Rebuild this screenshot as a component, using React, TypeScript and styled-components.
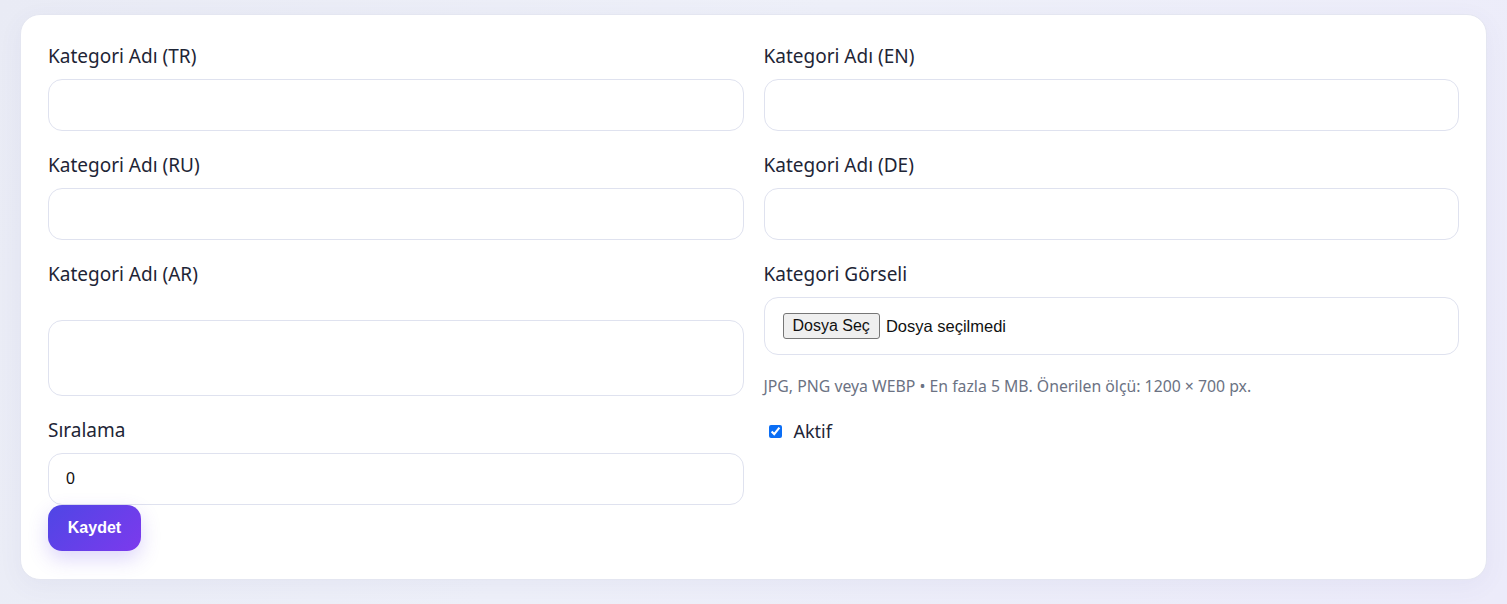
import React from 'react';
import styled, { createGlobalStyle } from 'styled-components';

const GlobalStyle = createGlobalStyle`
    html, body {
        margin: 0;
        padding: 0;
    }
    body {
        min-height: 100vh;
        background: linear-gradient(120deg, #e9ebf5 0%, #eef0f9 45%, #ecebfa 100%);
        font-family: "Noto Sans", "Open Sans", sans-serif;
    }
`;

const Page = styled.div`
    padding: 14px 20px 24px;
`;

const Card = styled.form`
    background: #ffffff;
    border: 1px solid #e4e6f1;
    border-radius: 20px;
    padding: 27px 27px 28px;
    box-shadow: 0 6px 24px rgba(90, 90, 160, 0.06);
`;

const Grid = styled.div`
    display: grid;
    grid-template-columns: 1fr 1fr;
    column-gap: 20px;
    row-gap: 20px;
`;

const Field = styled.div`
    display: flex;
    flex-direction: column;
`;

const Label = styled.label`
    font-size: 19px;
    line-height: 28px;
    color: #1e2536;
    margin-bottom: 9px;
`;

const TextInput = styled.input<{ $tall?: boolean }>`
    box-sizing: border-box;
    height: ${p => (p.$tall ? '76px' : '52px')};
    margin-top: ${p => (p.$tall ? 'auto' : '0')};
    border: 1px solid #dfe2ef;
    border-radius: 14px;
    background: #ffffff;
    padding: 0 17px;
    font-family: "Liberation Sans", Arial, sans-serif;
    font-size: 16px;
    color: #111111;
    outline: none;
`;

const FileBox = styled.div`
    box-sizing: border-box;
    height: 58px;
    border: 1px solid #dfe2ef;
    border-radius: 14px;
    padding: 0 18px;
    display: flex;
    align-items: center;
    gap: 6px;
    font-family: "Liberation Sans", Arial, sans-serif;
    font-size: 16.5px;
    color: #111111;
`;

const FileButton = styled.button`
    height: 26px;
    padding: 0 9px;
    border: 1px solid #767676;
    border-radius: 3px;
    background: #efefef;
    font-family: "Liberation Sans", Arial, sans-serif;
    font-size: 16px;
    color: #111111;
`;

const Hint = styled.div`
    margin-top: 21px;
    font-size: 15.8px;
    line-height: 20px;
    color: #6b7283;
`;

const CheckRow = styled.label`
    display: flex;
    align-items: center;
    height: 30px;
    gap: 12px;
    padding-left: 1px;
    font-size: 18px;
    color: #1e2536;

    input {
        width: 13px;
        height: 13px;
        margin: 0 0 0 4px;
        accent-color: #0b6ef5;
    }
`;

const SaveButton = styled.button`
    width: 93px;
    height: 46px;
    border: none;
    border-radius: 14px;
    background: linear-gradient(135deg, #4f46e5 0%, #7c3aed 100%);
    color: #ffffff;
    font-family: "Liberation Sans", Arial, sans-serif;
    font-weight: 700;
    font-size: 16px;
    box-shadow: 0 8px 20px rgba(99, 70, 230, 0.22);
    cursor: pointer;
`;

const languages = [
    ['TR', 'EN'],
    ['RU', 'DE'],
];

const App = () => {
    return (
        <>
            <GlobalStyle />
            <Page>
                <Card onSubmit={e => e.preventDefault()}>
                    <Grid>
                        {languages.flat().map(code => (
                            <Field key={code}>
                                <Label>Kategori Adı ({code})</Label>
                                <TextInput type="text" />
                            </Field>
                        ))}
                        <Field>
                            <Label>Kategori Adı (AR)</Label>
                            <TextInput type="text" dir="rtl" $tall />
                        </Field>
                        <Field>
                            <Label>Kategori Görseli</Label>
                            <FileBox>
                                <FileButton type="button">Dosya Seç</FileButton>
                                <span>Dosya seçilmedi</span>
                            </FileBox>
                            <Hint>JPG, PNG veya WEBP • En fazla 5 MB. Önerilen ölçü: 1200 × 700 px.</Hint>
                        </Field>
                        <Field>
                            <Label>Sıralama</Label>
                            <TextInput type="number" defaultValue={0} />
                        </Field>
                        <Field>
                            <CheckRow>
                                <input type="checkbox" defaultChecked />
                                Aktif
                            </CheckRow>
                        </Field>
                    </Grid>
                    <SaveButton type="submit">Kaydet</SaveButton>
                </Card>
            </Page>
        </>
    );
};

export default App;
